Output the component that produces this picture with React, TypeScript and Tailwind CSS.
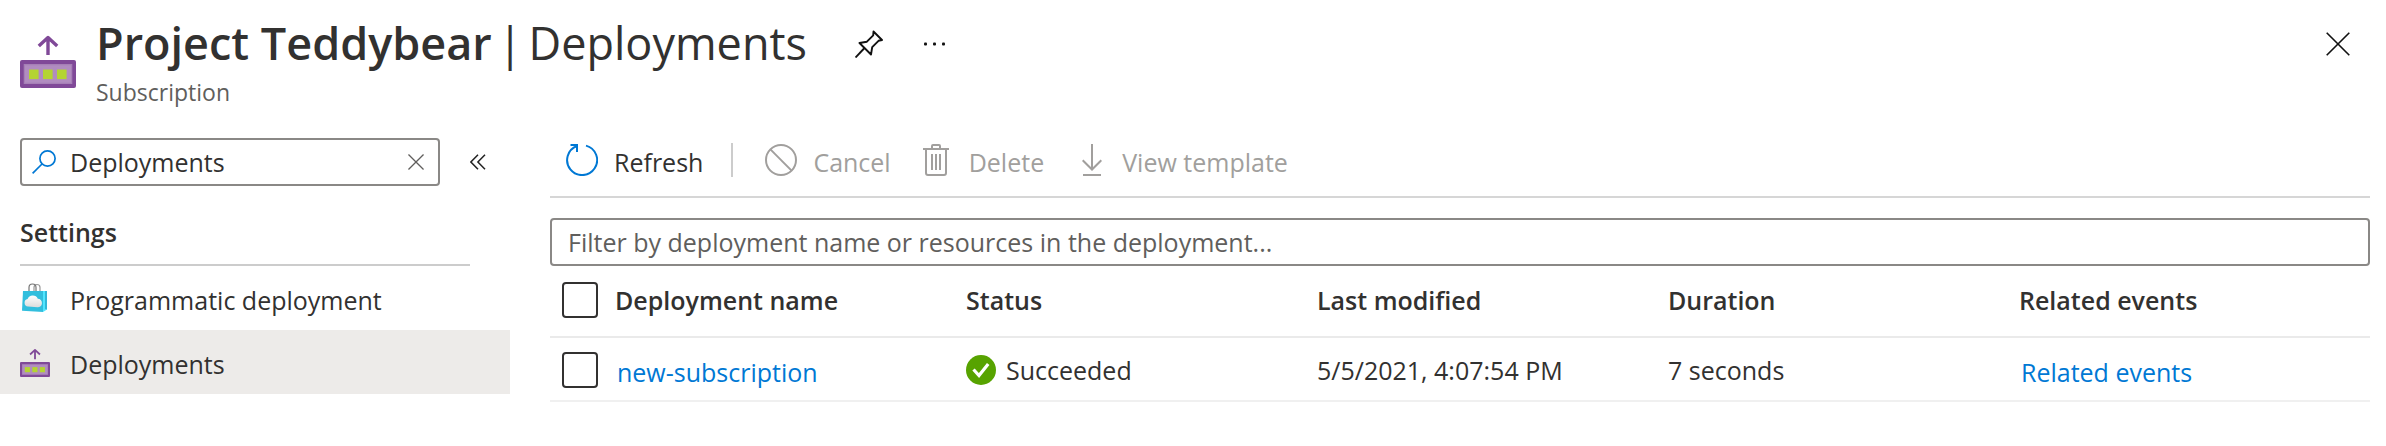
import { useState } from "react";
import type { ReactNode } from "react";

function DeploymentsIcon({ className }: { className: string }) {
  return (
    <svg viewBox="0 0 56 56" className={className} aria-hidden="true">
      <path
        d="M18.800 14 28 5.500l9.200 8.500M28 5V23"
        fill="none"
        stroke="#804998"
        strokeWidth="3.400"
        strokeLinejoin="round"
      />
      <rect x="0" y="28" width="56" height="28" rx="2" fill="#804998" />
      <rect x="3.700" y="32" width="48.600" height="20" fill="#a67fb6" />
      <rect x="5" y="33.300" width="46" height="17.400" fill="#b18cc0" />
      <rect x="9" y="37.500" width="9.600" height="9.600" fill="#b4d432" />
      <rect x="23" y="37.500" width="9.600" height="9.600" fill="#b4d432" />
      <rect x="37" y="37.500" width="9.600" height="9.600" fill="#b4d432" />
    </svg>
  );
}

function BagIcon() {
  return (
    <svg viewBox="0 0 30 30" className="size-[30px] shrink-0" aria-hidden="true">
      <defs>
        <linearGradient id="bag-cloud" x1="0" y1="0" x2="0" y2="1">
          <stop offset="0" stopColor="#ffffff" />
          <stop offset="1" stopColor="#dcdcdc" />
        </linearGradient>
      </defs>
      <path d="M14 8V4.500Q14 1.500 17 1.500T20 4.500V8" fill="none" stroke="#999" strokeWidth="1.200" />
      <path d="M9 8V4.500Q9 1 12.500 1T16 4.500V8" fill="none" stroke="#767676" strokeWidth="1.200" />
      <path d="M23 8h4v18.500l-4 2.500Z" fill="#50e6ff" />
      <path d="M25 8h2v18.500l-2-.5Z" fill="#32b8d8" />
      <path d="M3 8h20v21L2 27.800Z" fill="#32bedd" />
      <path
        d="M8 23.500a3.800 3.800 0 0 1-.4-7.500 5.500 5.500 0 0 1 10.200-.3 4.300 4.300 0 0 1-.3 8.600Z"
        fill="url(#bag-cloud)"
      />
    </svg>
  );
}

function PinIcon() {
  return (
    <svg viewBox="0 0 28 28" className="size-7" fill="none" stroke="#111" strokeWidth="1.900" strokeLinejoin="round" aria-hidden="true">
      <path d="M18.500 1.500 27 10l-3.500 .8-6.300 6.300L16 24.500 4.500 13l7.400-1.300 6.300-6.300Z" />
      <path d="M9.500 18 .5 27.500" />
    </svg>
  );
}

function CrossIcon({ className }: { className: string }) {
  return (
    <svg viewBox="0 0 24 24" className={className} fill="none" stroke="currentColor" aria-hidden="true">
      <path d="M.7.7l22.600 22.600M23.300.7.7 23.300" />
    </svg>
  );
}

function RefreshIcon() {
  return (
    <svg viewBox="0 0 32 32" className="size-8" fill="none" stroke="#0078d4" strokeWidth="2" aria-hidden="true">
      <path d="M20 1.600A15 15 0 1 1 11 2" />
      <path d="M4.500 1H11v7" />
    </svg>
  );
}

function CancelIcon() {
  return (
    <svg viewBox="0 0 32 32" className="size-8" fill="none" stroke="currentColor" strokeWidth="2" aria-hidden="true">
      <circle cx="16" cy="16" r="15" />
      <path d="m5.400 5.400 21.200 21.200" />
    </svg>
  );
}

function TrashIcon() {
  return (
    <svg viewBox="0 0 26 32" className="h-8 w-[26px]" fill="none" stroke="currentColor" strokeWidth="2" aria-hidden="true">
      <path d="M0 5h26M9 5V2q0-1 1-1h6q1 0 1 1v3M3 5v24q0 2 2 2h16q2 0 2-2V5" />
      <path d="M9 10v16M13 10v16M17 10v16" />
    </svg>
  );
}

function DownloadIcon() {
  return (
    <svg viewBox="0 0 20 32" className="h-8 w-5" fill="none" stroke="currentColor" strokeWidth="2" aria-hidden="true">
      <path d="M10 0v25M.7 16.200 10 25.500l9.300-9.300M1 31h18" />
    </svg>
  );
}

function SuccessIcon() {
  return (
    <svg viewBox="0 0 30 30" className="size-[30px] shrink-0" aria-hidden="true">
      <circle cx="15" cy="15" r="15" fill="#57a300" />
      <path d="m7.500 14.500 5.500 6L22.200 9" fill="none" stroke="#fff" strokeWidth="3.200" />
    </svg>
  );
}

function ToolbarButton({ icon, label, disabled }: { icon: ReactNode; label: string; disabled?: boolean }) {
  return (
    <button type="button" disabled={disabled} className="flex items-center disabled:text-[#a19f9d]">
      {icon}
      <span className="pt-1">{label}</span>
    </button>
  );
}

function Checkbox({ label }: { label: string }) {
  return (
    <input
      type="checkbox"
      aria-label={label}
      className="block size-9 appearance-none rounded-sm border-2 border-[#323130] bg-white checked:bg-[#0078d4]"
    />
  );
}

export default function App() {
  const [query, setQuery] = useState("Deployments");

  return (
    <div className="bg-white font-['Open_Sans',sans-serif] text-[25px] leading-8 text-[#323130]">
      <header className="flex items-start pr-9 pl-5">
        <DeploymentsIcon className="mt-8 size-14 shrink-0" />
        <div className="ml-5 pt-2.5">
          <h1 className="flex gap-1.5 text-[45px] leading-[66px] whitespace-nowrap">
            <span className="font-semibold">Project Teddybear</span>
            <span>|</span>
            <span>Deployments</span>
          </h1>
          <p className="text-[23px] leading-8 text-[#605e5c]">Subscription</p>
        </div>
        <button type="button" aria-label="Pin" className="mt-[30px] ml-12">
          <PinIcon />
        </button>
        <button type="button" aria-label="More" className="mt-[30px] ml-10">
          <svg viewBox="0 0 24 28" className="h-7 w-6" fill="#111" aria-hidden="true">
            <rect x="1" y="12.500" width="3" height="3" rx="1" />
            <rect x="10" y="12.500" width="3" height="3" rx="1" />
            <rect x="19" y="12.500" width="3" height="3" rx="1" />
          </svg>
        </button>
        <button type="button" aria-label="Close" className="mt-8 ml-auto text-[#111]">
          <CrossIcon className="size-6 stroke-[1.6]" />
        </button>
      </header>

      <div className="flex items-start pt-[30px]">
        <aside className="w-[510px] shrink-0">
          <div className="flex items-center pl-5">
            <div className="flex h-12 w-[420px] items-center rounded-sm border-2 border-[#8a8886] px-[10px]">
              <svg viewBox="0 0 24 24" className="size-6 shrink-0" fill="none" stroke="#0078d4" strokeWidth="1.700" aria-hidden="true">
                <circle cx="15.500" cy="8.500" r="7.600" />
                <path d="M10 14 .6 23.400" />
              </svg>
              <input
                aria-label="Search menu"
                value={query}
                onChange={(e) => setQuery(e.target.value)}
                className="ml-3.5 w-full min-w-0 bg-transparent outline-none"
              />
              <button type="button" aria-label="Clear search" onClick={() => setQuery("")} className="mr-1 text-[#605e5c]">
                <CrossIcon className="size-4 stroke-2" />
              </button>
            </div>
            <button type="button" aria-label="Collapse menu" className="ml-[30px]">
              <svg viewBox="0 0 16 16" className="size-4" fill="none" stroke="#222" strokeWidth="1.500" aria-hidden="true">
                <path d="M8 .8.900 8 8 15.200M15 .8 7.900 8 15 15.200" />
              </svg>
            </button>
          </div>
          <h2 className="mr-10 ml-5 border-b-2 border-[#cccccc] pt-[30px] pb-4 font-semibold">Settings</h2>
          <nav>
            <a href="#programmatic" className="flex h-16 items-center gap-5 pl-5">
              <BagIcon />
              <span className="pt-1">Programmatic deployment</span>
            </a>
            <a href="#deployments" aria-current="page" className="flex h-16 items-center gap-5 bg-[#edebe9] pl-5">
              <DeploymentsIcon className="size-[30px] shrink-0" />
              <span className="pt-1">Deployments</span>
            </a>
          </nav>
        </aside>

        <main className="mr-4 ml-10 min-w-0 flex-1">
          <div className="flex h-[60px] items-center border-b-2 border-[#d6d6d6] pb-3.5 pl-4">
            <ToolbarButton icon={<span className="mr-4"><RefreshIcon /></span>} label="Refresh" />
            <span className="mr-8 ml-7 h-[34px] w-0.5 bg-[#cccccc]" />
            <ToolbarButton icon={<span className="mr-4"><CancelIcon /></span>} label="Cancel" disabled />
            <span className="w-8" />
            <ToolbarButton icon={<span className="mr-5"><TrashIcon /></span>} label="Delete" disabled />
            <span className="w-[38px]" />
            <ToolbarButton icon={<span className="mr-5"><DownloadIcon /></span>} label="View template" disabled />
          </div>
          <input
            aria-label="Filter deployments"
            placeholder="Filter by deployment name or resources in the deployment..."
            className="mt-5 block h-12 w-full rounded-sm border-2 border-[#8a8886] px-4 placeholder:text-[#605e5c] placeholder:opacity-100"
          />
          <table className="w-full table-fixed border-collapse text-left whitespace-nowrap">
            <thead>
              <tr className="h-[71px] border-b-2 border-[#eaeaea]">
                <th className="w-[65px] pb-0.5 pl-3"><Checkbox label="Select all" /></th>
                <th className="pb-0.5 font-semibold">Deployment name</th>
                <th className="pb-0.5 font-semibold">Status</th>
                <th className="pb-0.5 font-semibold">Last modified</th>
                <th className="pb-0.5 font-semibold">Duration</th>
                <th className="pb-0.5 font-semibold">Related events</th>
              </tr>
            </thead>
            <tbody>
              <tr className="h-16 border-b-2 border-[#f0f0f0]">
                <td className="pt-0.5 pl-3"><Checkbox label="Select new-subscription" /></td>
                <td className="pt-1.5 pl-0.5"><a href="#new-subscription" className="text-[#0078d4]">new-subscription</a></td>
                <td className="pt-0.5">
                  <span className="flex items-center gap-[10px]">
                    <SuccessIcon />
                    Succeeded
                  </span>
                </td>
                <td className="pt-0.5">5/5/2021, 4:07:54 PM</td>
                <td className="pt-0.5">7 seconds</td>
                <td className="pt-1.5 pl-0.5"><a href="#events" className="text-[#0078d4]">Related events</a></td>
              </tr>
            </tbody>
          </table>
        </main>
      </div>
    </div>
  );
}
